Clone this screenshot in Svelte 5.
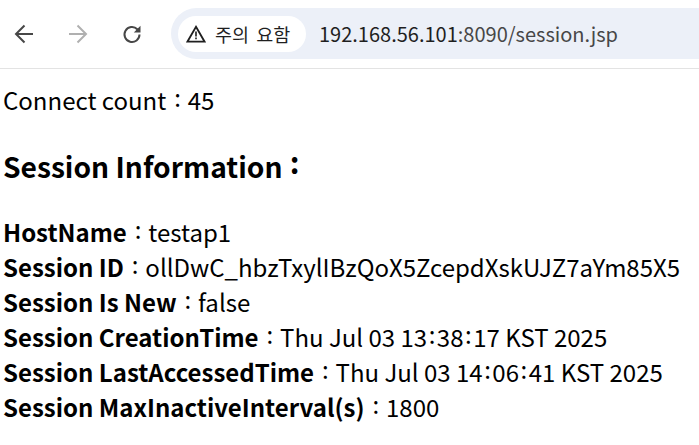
<script>
    const rows = [
        ["HostName", "testap1"],
        ["Session ID", "ollDwC_hbzTxylIBzQoX5ZcepdXskUJZ7aYm85X5"],
        ["Session Is New", "false"],
        ["Session CreationTime", "Thu Jul 03 13:38:17 KST 2025"],
        ["Session LastAccessedTime", "Thu Jul 03 14:06:41 KST 2025"],
        ["Session MaxInactiveInterval(s)", "1800"],
    ];
</script>

<div class="toolbar">
    <button class="nav" aria-label="Back">
        <svg width="20" height="20" viewBox="0 0 20 20"><path d="M10.5 1.5 2 10l8.5 8.5M2.5 10H19" fill="none" stroke="#474747" stroke-width="2"/></svg>
    </button>
    <button class="nav" aria-label="Forward">
        <svg width="20" height="20" viewBox="0 0 20 20"><path d="M9.5 1.5 18 10l-8.500 8.500M17.500 10H1" fill="none" stroke="#b0b0b0" stroke-width="2"/></svg>
    </button>
    <button class="nav reload" aria-label="Reload">
        <svg width="20" height="20" viewBox="0 0 20 20"><path d="M17.500 10.500A7.500 7.500 0 1 1 15.300 5.200L17 7" fill="none" stroke="#474747" stroke-width="2"/><path d="M18.500 1.800v6.700h-6.700z" fill="#474747"/></svg>
    </button>
    <div class="omnibox">
        <div class="chip">
            <svg width="20" height="18" viewBox="0 0 20 18"><path d="M10 1.800 18.600 16.700H1.400z" fill="none" stroke="#1f1f1f" stroke-width="1.800"/><path d="M9.200 6.500h1.600v5H9.200zM9.200 12.500h1.600v1.700H9.200z" fill="#1f1f1f"/></svg>
            <span>주의 요함</span>
        </div>
        <div class="url">192.168.56.101<span class="rest">:8090/session.jsp</span></div>
    </div>
</div>

<main>
    <p class="count">Connect count <span class="colon">:</span> 45</p>
    <h2>Session Information <span class="colon big">:</span></h2>
    {#each rows as [label, value]}
        <div class="row"><b>{label}</b> <span class="colon">:</span> {#each value.split(":") as part, i}{#if i}<span class="colon tick">:</span>{/if}{part}{/each}</div>
    {/each}
</main>

<style>
    :global(body) {
        background: #fff;
        overflow: hidden;
    }

    .toolbar {
        height: 69px;
        box-sizing: border-box;
        border-bottom: 1px solid #e3e3e3;
        display: flex;
        align-items: center;
        padding-left: 4px;
        padding-bottom: 1px;
        font-family: "Noto Sans CJK KR", "Noto Sans", sans-serif;
    }

    .nav {
        width: 40px;
        height: 40px;
        margin-right: 14px;
        border: 0;
        padding: 0;
        background: none;
        display: flex;
        align-items: center;
        justify-content: center;
    }

    .reload {
        margin-right: 19px;
    }

    .omnibox {
        flex: 1;
        height: 51px;
        margin-right: -30px;
        border-radius: 26px;
        background: #ecf0f8;
        display: flex;
        align-items: center;
        padding-left: 7px;
    }

    .chip {
        height: 36px;
        width: 128px;
        border-radius: 18px;
        background: #fff;
        display: flex;
        align-items: center;
        gap: 9px;
        padding-left: 8px;
        box-sizing: border-box;
        font-size: 18.5px;
        word-spacing: 3px;
        color: #1f1f1f;
        flex-shrink: 0;
    }

    .url {
        margin-left: 13px;
        font-size: 20px;
        color: #1f1f1f;
        white-space: nowrap;
    }

    .rest {
        color: #474747;
    }

    main {
        padding: 0 3px;
        font-family: "Noto Sans CJK KR", "Noto Sans", sans-serif;
        font-size: 24px;
        color: #000;
    }

    .count {
        margin: 13px 0 0;
        line-height: 35px;
    }

    h2 {
        margin: 29px 0 28px;
        font-size: 28.2px;
        line-height: 40px;
    }

    .row {
        line-height: 35px;
        white-space: nowrap;
    }

    .colon {
        line-height: 0;
        vertical-align: 3px;
        margin: 0 1.5px 0 2.5px;
    }

    .tick {
        margin: 0 1.5px;
    }

    .big {
        font-size: 30px;
        vertical-align: 4px;
        margin: 0 1px;
    }
</style>
